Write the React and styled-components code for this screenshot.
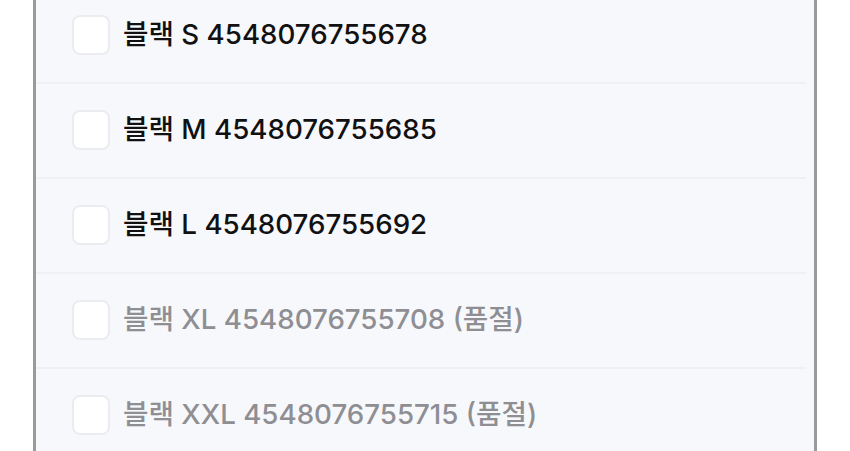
import React from 'react';
import styled, { createGlobalStyle } from 'styled-components';

const GlobalStyle = createGlobalStyle`
  html, body {
    margin: 0;
    padding: 0;
    background: #ffffff;
    overflow: hidden;
  }
  body {
    font-family: Inter, "Noto Sans CJK KR", "Noto Sans", sans-serif;
  }
`;

const Page = styled.div`
  width: 850px;
  height: 451px;
  overflow: hidden;
  padding-left: 33px;
  box-sizing: border-box;
`;

const Panel = styled.ul`
  list-style: none;
  margin: -13px 0 0;
  padding: 0;
  width: 784px;
  box-sizing: border-box;
  background: #f7f8fb;
  border-left: 3px solid #9a9a9a;
  border-right: 3px solid #9a9a9a;
`;

const Row = styled.li`
  display: flex;
  align-items: center;
  gap: 13px;
  height: 95px;
  padding-left: 36px;
  box-sizing: border-box;
  position: relative;

  & + &::before {
    content: '';
    position: absolute;
    top: 0;
    left: 0;
    right: 8px;
    height: 2px;
    background: #eef0f3;
  }
`;

const Box = styled.span`
  width: 38px;
  height: 40px;
  box-sizing: border-box;
  border: 2px solid #ebecef;
  border-radius: 8px;
  background: #ffffff;
  flex-shrink: 0;
  margin-top: 1px;
`;

const Label = styled.span`
  font-size: 27.7px;
  font-weight: 500;
  line-height: 1;
  color: ${(p) => (p.$soldOut ? '#8e8e93' : '#111111')};
`;

const options = [
  { size: 'S', code: '4548076755678' },
  { size: 'M', code: '4548076755685' },
  { size: 'L', code: '4548076755692' },
  { size: 'XL', code: '4548076755708', soldOut: true },
  { size: 'XXL', code: '4548076755715', soldOut: true },
];

export default function App() {
  return (
    <>
      <GlobalStyle />
      <Page>
        <Panel>
          {options.map((o) => (
            <Row key={o.code}>
              <Box />
              <Label $soldOut={o.soldOut}>
                블랙 {o.size} {o.code}
                {o.soldOut ? ' (품절)' : ''}
              </Label>
            </Row>
          ))}
        </Panel>
      </Page>
    </>
  );
}
